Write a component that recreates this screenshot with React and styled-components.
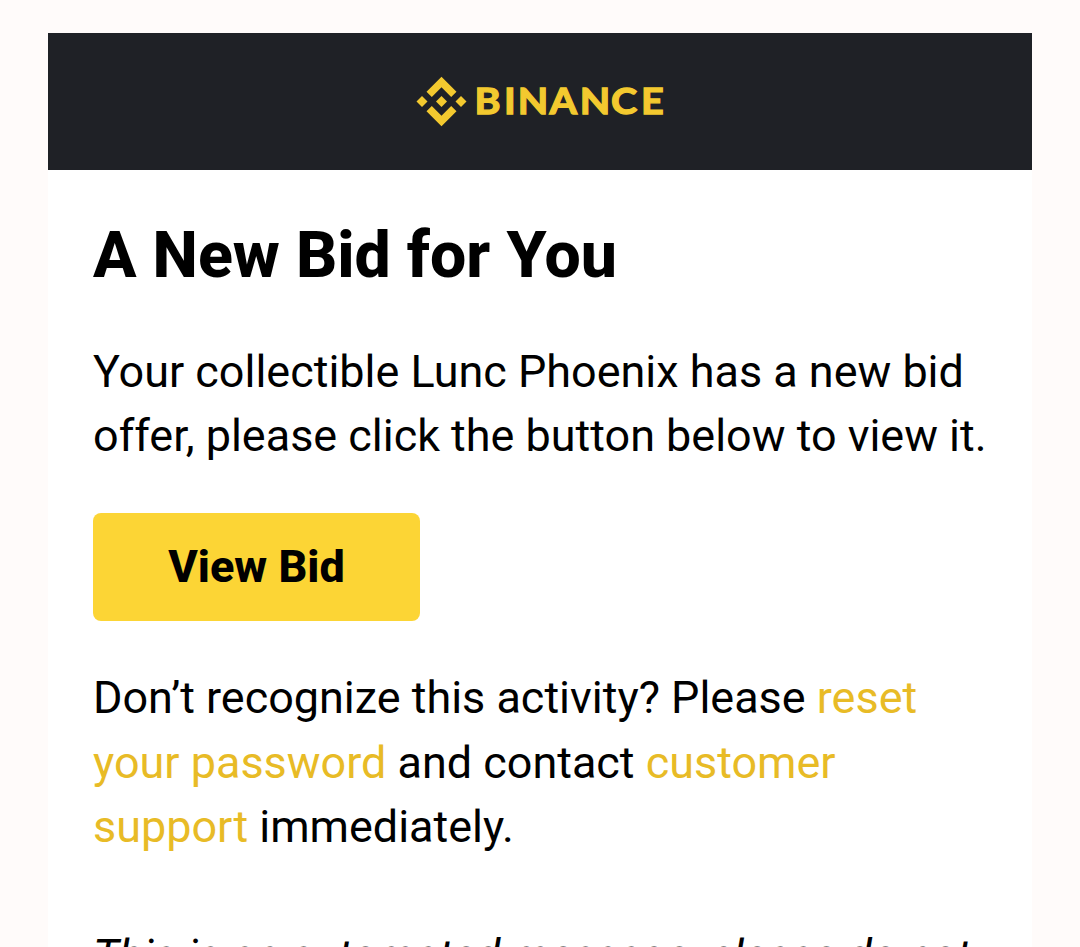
import styled, { createGlobalStyle } from 'styled-components';

const GlobalStyle = createGlobalStyle`
  html, body {
    margin: 0;
    background: #fffbfa;
    height: 947px;
    overflow: hidden;
  }
`;

const Page = styled.div`
  box-sizing: border-box;
  height: 947px;
  padding: 33px 48px 0;
  overflow: hidden;
  background: #fffbfa;
  font-family: Roboto, 'Liberation Sans', sans-serif;
  color: #000;
`;

const Mail = styled.div`
  background: #fff;
`;

const Header = styled.div`
  display: flex;
  justify-content: center;
  align-items: center;
  height: 137px;
  background: #1f2126;
`;

const Logo = styled.svg`
  display: block;
  width: 248px;
  height: 51px;
`;

const Wordmark = styled.text`
  font-family: Lato, sans-serif;
  font-size: 37px;
  font-weight: 700;
  stroke: #f3c92f;
  stroke-width: 1.3px;
`;

const Content = styled.div`
  padding: 45px 24px 0 45px;
`;

const Title = styled.h1`
  margin: 0;
  font-size: 64.4px;
  line-height: 80px;
  font-weight: 800;
  white-space: nowrap;
`;

const Text = styled.p`
  margin: 0;
  padding-top: ${({ $top }) => $top}px;
  font-size: 44.95px;
  line-height: ${({ $line }) => $line || 64.5}px;
  font-style: ${({ $italic }) => ($italic ? 'italic' : 'normal')};
  white-space: nowrap;
`;

const Button = styled.button`
  display: block;
  width: 327px;
  height: 108px;
  margin: 45px 0 0;
  padding: 0 0 2px;
  border: none;
  border-radius: 8px;
  background: #fcd535;
  color: #000;
  font-family: inherit;
  font-size: 45px;
  font-weight: 800;
`;

const Link = styled.a`
  color: #e8bb26;
`;

const App = () => {
  return (
    <Page>
      <GlobalStyle />
      <Mail>
        <Header>
          <Logo viewBox="0 0 248 51" fill="#f3c92f">
            <path d="M25.500 0.700l15 15-5.300 5.300-9.700-9.700-9.700 9.700-5.300-5.300z" />
            <path d="M25.500 50.300l15-15-5.300-5.300-9.700 9.700-9.700-9.700-5.300 5.300z" />
            <path d="M6 20l5.500 5.500L6 31 0.500 25.500z" />
            <path d="M45 20l5.500 5.500-5.500 5.500-5.500-5.500z" />
            <path d="M25.500 20l5.500 5.500-5.500 5.500-5.500-5.500z" />
            <Wordmark transform="scale(1.07 1)" y="38.300" x="54.700 82.300 95.200 124.800 153 182.200 210.200">BINANCE</Wordmark>
          </Logo>
        </Header>
        <Content>
          <Title>A New Bid for You</Title>
          <Text $top={45} $line={64}>
            Your collectible Lunc Phoenix has a new bid
            <br />
            offer, please click the button below to view it.
          </Text>
          <Button>View Bid</Button>
          <Text $top={45}>
            Don’t recognize this activity? Please <Link>reset</Link>
            <br />
            <Link>your password</Link> and contact <Link>customer</Link>
            <br />
            <Link>support</Link> immediately.
          </Text>
          <Text $top={64} $italic>This is an automated message, please do not</Text>
        </Content>
      </Mail>
    </Page>
  );
};

export default App;
